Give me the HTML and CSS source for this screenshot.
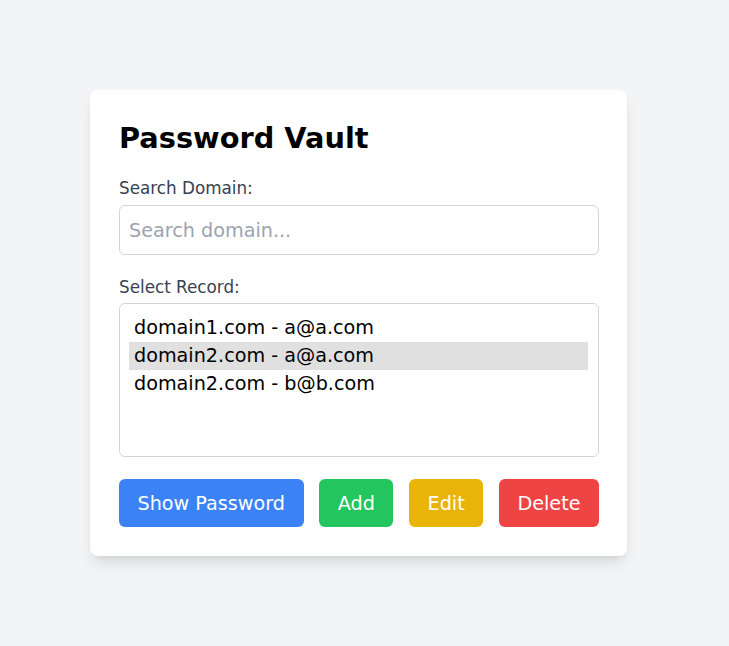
FILE: index.html
```html
<!DOCTYPE html>
<html lang="en">
<head>
<meta charset="utf-8">
<title>Password Vault</title>
<link rel="stylesheet" href="styles.css">
</head>
<body>
<main class="page">
  <section class="card">
    <h1 class="title">Password Vault</h1>
    <label class="label" for="search">Search Domain:</label>
    <input class="input" id="search" type="text" placeholder="Search domain...">
    <label class="label label-second">Select Record:</label>
    <div class="list" role="listbox">
      <div class="option" role="option">domain1.com - a@a.com</div>
      <div class="option option-selected" role="option" aria-selected="true">domain2.com - a@a.com</div>
      <div class="option" role="option">domain2.com - b@b.com</div>
    </div>
    <div class="actions">
      <button class="btn btn-blue">Show Password</button>
      <button class="btn btn-green">Add</button>
      <button class="btn btn-yellow">Edit</button>
      <button class="btn btn-red">Delete</button>
    </div>
  </section>
</main>
</body>
</html>
```
FILE: styles.css
```css
* { box-sizing: border-box; }
html, body { margin: 0; padding: 0; }
body {
  background: #f3f4f6;
  font-family: "DejaVu Sans", "Noto Sans", sans-serif;
  color: #000;
}
.page {
  min-height: 646px;
  padding: 90px 0 90px 90px;
  display: flex;
  align-items: flex-start;
}
.card {
  width: 537px;
  background: #fff;
  border-radius: 8px;
  padding: 29px 28px 29px 29px;
  box-shadow: 0 10px 15px -3px rgba(0,0,0,0.1), 0 4px 6px -4px rgba(0,0,0,0.1);
  display: flex;
  flex-direction: column;
}
.title {
  margin: 0 0 19px;
  font-size: 28.8px;
  line-height: 38px;
  font-weight: 700;
}
.label {
  display: block;
  font-size: 16.8px;
  line-height: 25px;
  color: #374151;
  margin-bottom: 4px;
}
.label-second { margin-top: 20px; margin-bottom: 3px; }
.input {
  width: 100%;
  height: 50px;
  border: 1px solid #d1d5db;
  border-radius: 6px;
  padding: 0 9px;
  font-family: inherit;
  font-size: 19.2px;
  color: #000;
  outline: none;
}
.input::placeholder { color: #9ca3af; }
.list {
  height: 154px;
  border: 1px solid #d1d5db;
  border-radius: 6px;
  padding: 10px 10px 10px 9px;
}
.option {
  font-size: 19.2px;
  line-height: 28px;
  padding: 0 5px;
  white-space: nowrap;
}
.option-selected { background: #e0e0e0; }
.actions {
  margin-top: 22px;
  display: flex;
  justify-content: space-between;
}
.btn {
  height: 48px;
  border: none;
  border-radius: 6px;
  padding: 0 18.5px;
  font-family: inherit;
  font-size: 19.2px;
  color: #fff;
  cursor: pointer;
}
.btn-blue { background: #3b82f6; }
.btn-green { background: #22c55e; }
.btn-yellow { background: #eab308; }
.btn-red { background: #ef4444; }
```
